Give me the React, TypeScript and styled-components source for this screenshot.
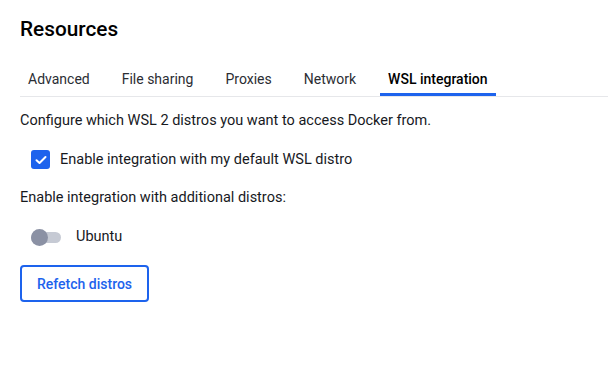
import { useState } from 'react';
import styled, { createGlobalStyle } from 'styled-components';

const GlobalStyle = createGlobalStyle`
   html, body {
      margin: 0;
      padding: 0;
      background: #ffffff;
   }
   body {
      font-family: Roboto, 'Liberation Sans', Arial, sans-serif;
      color: #17191e;
   }
`;

const Page = styled.main`
   padding: 19px 0 0 20px;
`;

const Title = styled.h1`
   margin: 0;
   font-size: 20.8px;
   font-weight: 500;
   line-height: 20px;
   color: #000000;
`;

const TabBar = styled.nav`
   display: flex;
   gap: 16px;
   margin-top: 26px;
   border-bottom: 1px solid #e6e7ea;
`;

const Tab = styled.button<{ $active?: boolean }>`
   border: none;
   background: none;
   font-family: inherit;
   font-size: 14px;
   font-weight: ${(p) => (p.$active ? 500 : 400)};
   color: ${(p) => (p.$active ? '#000000' : '#2b2d33')};
   padding: 6px 8px 6px;
   line-height: 16px;
   border-bottom: 3px solid ${(p) => (p.$active ? '#1d63ed' : 'transparent')};
   cursor: pointer;
`;

const Content = styled.section`
   display: flex;
   flex-direction: column;
   align-items: flex-start;
   padding-top: 16px;
`;

const Text = styled.p`
   margin: 0;
   font-size: 14.5px;
   line-height: 16px;
   color: #17191e;
`;

const OptionRow = styled.label<{ $gap: number }>`
   display: flex;
   align-items: center;
   gap: ${(p) => p.$gap}px;
   font-size: 14.5px;
   line-height: 16px;
   color: #17191e;
   cursor: pointer;
`;

const CheckRow = styled(OptionRow)`
   margin: 21px 0 0 11px;
`;

const ToggleRow = styled(OptionRow)`
   margin: 23px 0 0 11px;
`;

const Box = styled.span<{ $checked: boolean }>`
   display: flex;
   align-items: center;
   justify-content: center;
   width: 19px;
   height: 19px;
   border-radius: 3px;
   background: ${(p) => (p.$checked ? '#1d63ed' : '#ffffff')};
   border: ${(p) => (p.$checked ? 'none' : '2px solid #8d93a6')};
   box-sizing: border-box;
`;

const Track = styled.span`
   position: relative;
   display: block;
   width: 30px;
   height: 11px;
   border-radius: 6px;
   background: #c6cad4;
`;

const Thumb = styled.span`
   position: absolute;
   left: 0;
   top: -3px;
   width: 17px;
   height: 17px;
   border-radius: 50%;
   background: #8b91a4;
`;

const SectionText = styled(Text)`
   margin-top: 21px;
`;

const OutlineButton = styled.button`
   margin-top: 20px;
   height: 37px;
   padding: 0 15px;
   border: 2px solid #1d63ed;
   border-radius: 4px;
   background: #ffffff;
   color: #1d63ed;
   font-family: inherit;
   font-size: 14px;
   font-weight: 500;
   cursor: pointer;
`;

const tabs = ['Advanced', 'File sharing', 'Proxies', 'Network', 'WSL integration'];

const App = () => {
   const [checked, setChecked] = useState(true);
   const [active, setActive] = useState('WSL integration');

   return (
      <>
         <GlobalStyle />
         <Page>
            <Title>Resources</Title>
            <TabBar>
               {tabs.map((t) => (
                  <Tab key={t} $active={t === active} onClick={() => setActive(t)}>
                     {t}
                  </Tab>
               ))}
            </TabBar>
            <Content>
               <Text>Configure which WSL 2 distros you want to access Docker from.</Text>
               <CheckRow $gap={10} onClick={() => setChecked(!checked)}>
                  <Box $checked={checked}>
                     {checked && (
                        <svg width='12' height='10' viewBox='0 0 12 10'>
                           <path
                              d='M1.5 5.2 L4.5 8 L10.5 2'
                              fill='none'
                              stroke='#ffffff'
                              strokeWidth='2'
                              strokeLinecap='round'
                              strokeLinejoin='round'
                           />
                        </svg>
                     )}
                  </Box>
                  Enable integration with my default WSL distro
               </CheckRow>
               <SectionText>Enable integration with additional distros:</SectionText>
               <ToggleRow $gap={15}>
                  <Track>
                     <Thumb />
                  </Track>
                  Ubuntu
               </ToggleRow>
               <OutlineButton>Refetch distros</OutlineButton>
            </Content>
         </Page>
      </>
   );
};

export default App;
